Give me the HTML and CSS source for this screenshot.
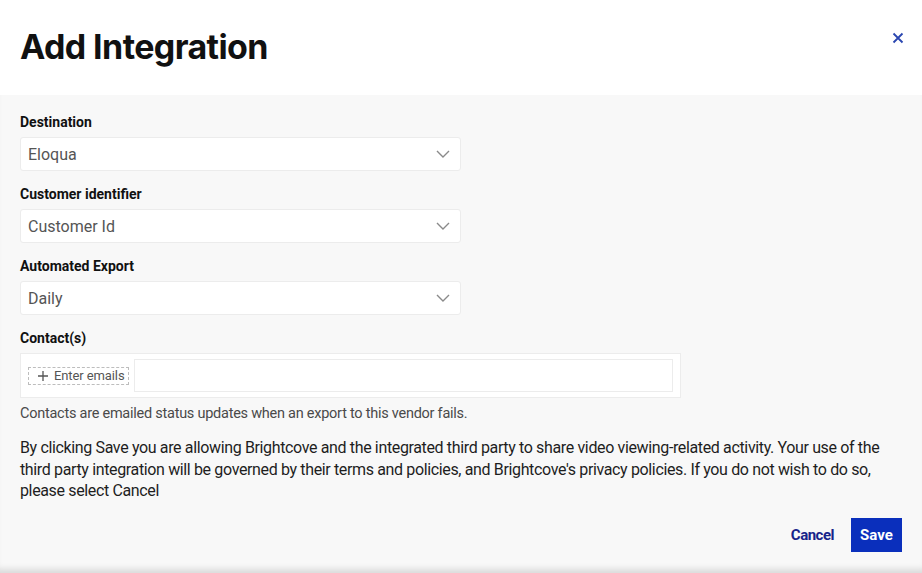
FILE: index.html
```html
<!DOCTYPE html>
<html>
<head>
<meta charset="utf-8">
<link rel="stylesheet" href="styles.css">
</head>
<body>
<div class="modal">
  <header class="head">
    <h1 class="title">Add Integration</h1>
    <button class="close" aria-label="Close">
      <svg width="12" height="12" viewBox="0 0 12 12"><path d="M1.5 1.5L10.5 10.5M10.5 1.5L1.5 10.5" stroke="#2a46b0" stroke-width="1.8" fill="none"/></svg>
    </button>
  </header>
  <main class="body">
    <div class="field">
      <div class="label">Destination</div>
      <div class="select"><span>Eloqua</span><svg class="chev" width="14" height="8" viewBox="0 0 14 8"><path d="M1 1L7 7L13 1" stroke="#8a8a8a" stroke-width="1.4" fill="none"/></svg></div>
    </div>
    <div class="field">
      <div class="label">Customer identifier</div>
      <div class="select"><span>Customer Id</span><svg class="chev" width="14" height="8" viewBox="0 0 14 8"><path d="M1 1L7 7L13 1" stroke="#8a8a8a" stroke-width="1.4" fill="none"/></svg></div>
    </div>
    <div class="field">
      <div class="label">Automated Export</div>
      <div class="select"><span>Daily</span><svg class="chev" width="14" height="8" viewBox="0 0 14 8"><path d="M1 1L7 7L13 1" stroke="#8a8a8a" stroke-width="1.4" fill="none"/></svg></div>
    </div>
    <div class="field">
      <div class="label">Contact(s)</div>
      <div class="contacts">
        <button class="add"><svg width="10" height="10" viewBox="0 0 10 10"><path d="M5 0V10M0 5H10" stroke="#555" stroke-width="1.3" fill="none"/></svg><span>Enter emails</span></button>
        <div class="emailinput"></div>
      </div>
    </div>
    <p class="help">Contacts are emailed status updates when an export to this vendor fails.</p>
    <p class="consent">By clicking Save you are allowing Brightcove and the integrated third party to share video viewing-related activity. Your use of the third party integration will be governed by their terms and policies, and Brightcove's privacy policies. If you do not wish to do so, please select Cancel</p>
    <div class="actions">
      <button class="cancel">Cancel</button>
      <button class="save">Save</button>
    </div>
  </main>
</div>
</body>
</html>
```
FILE: styles.css
```css
* { box-sizing: border-box; }
html, body { margin: 0; padding: 0; }
body {
  width: 922px;
  height: 573px;
  overflow: hidden;
  font-family: Roboto, "Liberation Sans", sans-serif;
  color: #1a1a1a;
  background: #fff;
}
.modal {
  height: 573px;
  display: flex;
  flex-direction: column;
  background: #fff;
}
.head {
  height: 95px;
  display: flex;
  justify-content: space-between;
  align-items: flex-start;
  padding: 0 20px;
  background: #fff;
}
.title {
  margin: 26px 0 0;
  font-family: "Inter", "Liberation Sans", sans-serif;
  font-size: 34px;
  font-weight: 700;
  letter-spacing: -0.6px;
  color: #111;
  line-height: 42px;
}
.close {
  margin: 32px -2px 0 0;
  border: 0;
  background: none;
  padding: 0;
  width: 12px;
  height: 12px;
  display: flex;
}
.body {
  flex: 1;
  background: #f8f8f8;
  padding: 17px 20px 0;
  display: flex;
  flex-direction: column;
  box-shadow: inset 0 -8px 6px -4px rgba(0,0,0,0.12);
}
.field { display: flex; flex-direction: column; }
.label {
  font-weight: 700;
  font-size: 14px;
  line-height: 20px;
  color: #111;
  margin-bottom: 5px;
}
.select {
  width: 441px;
  height: 34px;
  background: #fff;
  border: 1px solid #ececec;
  border-radius: 3px;
  display: flex;
  align-items: center;
  justify-content: space-between;
  padding: 0 10px 0 7px;
  font-size: 16px;
  color: #555;
  margin-bottom: 13px;
}
.chev { display: block; }
.contacts {
  width: 661px;
  height: 45px;
  background: #fff;
  border: 1px solid #ececec;
  display: flex;
  align-items: center;
  gap: 5px;
  padding: 0 7px;
}
.add {
  height: 18px;
  width: 101px;
  flex: none;
  border: 1px dashed #bdbdbd;
  background: #fff;
  display: flex;
  align-items: center;
  gap: 6px;
  padding: 0 0 0 9px;
  white-space: nowrap;
  font-family: Roboto, "Liberation Sans", sans-serif;
  font-size: 13px;
  color: #555;
  letter-spacing: -0.1px;
}
.add svg { flex: none; }
.emailinput {
  flex: 1;
  height: 33px;
  border: 1px solid #ececec;
  background: #fff;
}
.help {
  margin: 6px 0 0;
  font-size: 14.5px;
  letter-spacing: -0.25px;
  line-height: 20px;
  color: #4a4a4a;
}
.consent {
  margin: 13px 0 0;
  font-size: 16px;
  letter-spacing: -0.36px;
  line-height: 21.5px;
  color: #1e1e1e;
}
.actions {
  display: flex;
  justify-content: flex-end;
  align-items: center;
  gap: 17px;
  margin-top: 16px;
}
.cancel {
  border: 0;
  background: none;
  font-family: Roboto, "Liberation Sans", sans-serif;
  font-weight: 700;
  font-size: 15px;
  letter-spacing: -0.5px;
  color: #17248a;
  padding: 0;
}
.save {
  width: 51px;
  height: 34px;
  border: 0;
  background: #0a2fbc;
  color: #fff;
  font-family: Roboto, "Liberation Sans", sans-serif;
  font-weight: 700;
  font-size: 15px;
  padding: 0;
}
```
